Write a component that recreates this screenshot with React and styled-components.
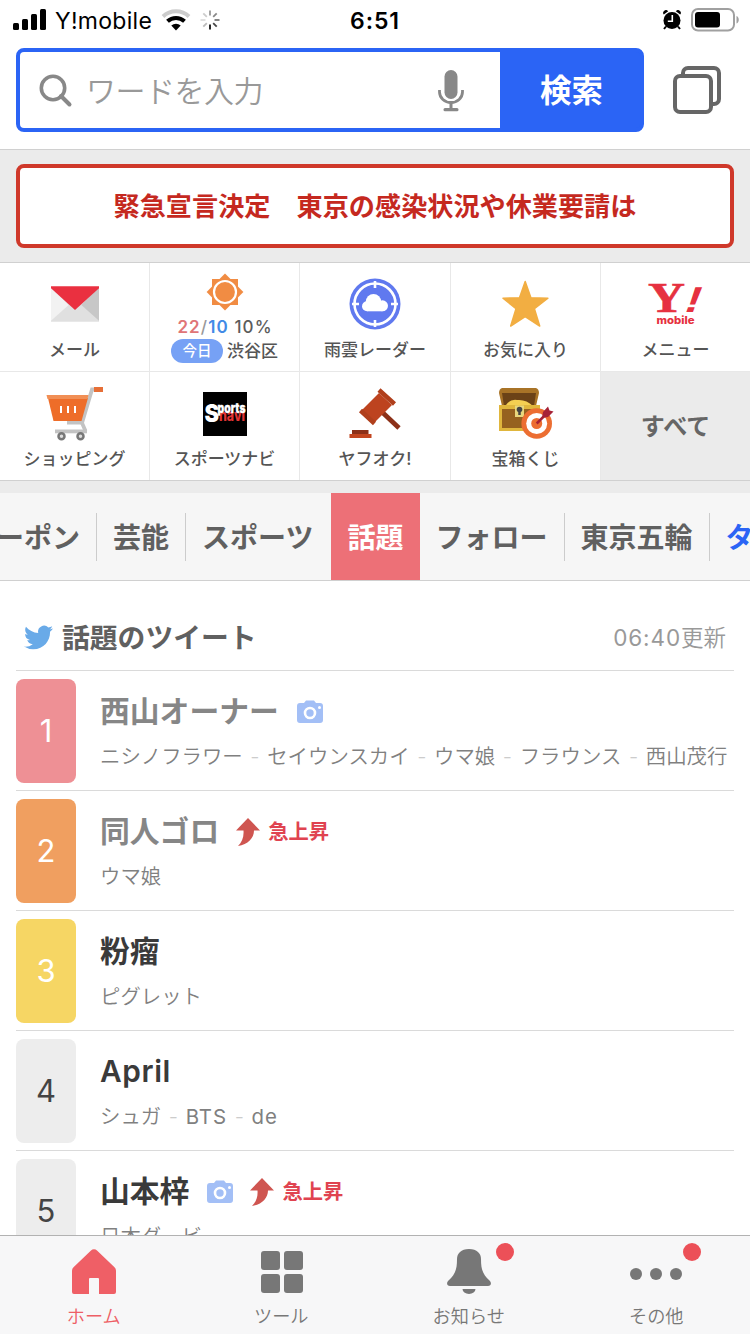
import React from "react";
import styled, { createGlobalStyle } from "styled-components";

const GlobalStyle = createGlobalStyle`
    * { box-sizing: border-box; }
    body {
        margin: 0;
        background: #fff;
        font-family: Inter, "Noto Sans CJK JP", sans-serif;
        color: #666;
    }
    svg { display: block; flex-shrink: 0; }
    button { font-family: inherit; padding: 0; border: none; }
`

const Phone = styled.div`
    display: flex;
    flex-direction: column;
    width: 750px;
    height: 1334px;
    overflow: hidden;
    background: #fff;
`

const StatusBar = styled.header`
    display: grid;
    grid-template-columns: 1fr auto 1fr;
    align-items: center;
    height: 40px;
    padding: 0 11px 0 13px;
    color: #000;
    flex-shrink: 0;
`
const StatusLeft = styled.div`
    display: flex;
    align-items: center;
`
const Carrier = styled.span`
    font-size: 23px;
    line-height: 30px;
    letter-spacing: 0.3px;
    margin: 1px 9px 0 8px;
`
const SpinnerSlot = styled.span`
    margin-left: 9px;
`
const Clock = styled.span`
    font-size: 23px;
    font-weight: 600;
    letter-spacing: 0.9px;
    line-height: 30px;
    margin: 2px 1px 0 -1px;
`
const StatusRight = styled.div`
    display: flex;
    justify-content: flex-end;
    align-items: center;
    gap: 9px;
`

const SearchArea = styled.div`
    display: flex;
    height: 110px;
    padding: 8px 28px 0 16px;
    border-bottom: 1px solid #d0d0d0;
    justify-content: space-between;
    flex-shrink: 0;
`
const SearchBox = styled.div`
    display: flex;
    width: 628px;
    height: 84px;
    border: 4px solid #2b64f5;
    border-radius: 8px;
    overflow: hidden;
    background: #2b64f5;
`
const SearchField = styled.div`
    display: flex;
    align-items: center;
    flex: 1;
    padding: 2px 36px 0 19px;
    background: #fff;
`
const Placeholder = styled.span`
    flex: 1;
    margin-left: 13px;
    font-size: 30px;
    font-weight: 350;
    letter-spacing: -0.5px;
    line-height: 40px;
    color: #999;
`
const SearchBtn = styled.button`
    width: 140px;
    padding: 2px 0 0 3px;
    background: #2b64f5;
    color: #fff;
    font-size: 31.5px;
    font-weight: 700;
    line-height: 40px;
`
const WindowsIcon = styled.div`
    margin-top: 18px;
`

const AlertArea = styled.div`
    height: 113px;
    padding: 14px 16px 0;
    background: #ebebeb;
    border-bottom: 1px solid #d0d0d0;
    flex-shrink: 0;
`
const AlertBox = styled.div`
    display: flex;
    align-items: center;
    justify-content: center;
    height: 84px;
    padding-top: 2px;
    border: 4px solid #cf382a;
    border-radius: 8px;
    background: #fff;
    color: #c5291f;
    font-size: 26.15px;
    font-weight: 700;
    line-height: 40px;
`

const ToolGrid = styled.div`
    display: grid;
    grid-template-columns: 150px 150px 151px 150px 149px;
    grid-template-rows: 109px 108px;
    height: 218px;
    border-bottom: 1px solid #d0d0d0;
    flex-shrink: 0;
`
const Tool = styled.div`
    display: flex;
    flex-direction: column;
    align-items: center;
    justify-content: flex-end;
    padding-bottom: ${(p) => (p.$weather ? "8px" : "9px")};
    border-right: ${(p) => (p.$last ? "none" : "1px solid #e8e8e8")};
    border-bottom: ${(p) => (p.$top ? "1px solid #e8e8e8" : "none")};
`
const ToolIcon = styled.div`
    display: flex;
    align-items: center;
    justify-content: center;
    height: 60px;
    margin-bottom: ${(p) => (p.$top ? "4px" : "3px")};
`
const ToolLabel = styled.div`
    font-size: 17px;
    font-weight: 500;
    line-height: 24px;
    white-space: nowrap;
    color: #555;
`
const AllTools = styled.div`
    display: flex;
    align-items: center;
    justify-content: center;
    padding-top: 1px;
    background: #ebebeb;
    font-size: 24px;
    font-weight: 700;
    line-height: 30px;
`
const Temps = styled.div`
    margin-top: 4px;
    padding-left: 1px;
    font-size: 17px;
    font-weight: 500;
    letter-spacing: 1.1px;
    line-height: 24px;
    color: #5c5c5c;
`
const High = styled.span`
    color: #e07577;
    font-weight: 600;
`
const Low = styled.span`
    color: #418ae6;
    font-weight: 600;
`
const Slash = styled.span`
    color: #999;
`
const Place = styled.div`
    display: flex;
    align-items: center;
    gap: 4px;
    height: 24px;
`
const Today = styled.span`
    width: 52px;
    height: 24px;
    border-radius: 12px;
    background: #76a1f5;
    color: #fff;
    font-size: 14.5px;
    font-weight: 500;
    line-height: 24px;
    text-align: center;
`

const Tabs = styled.nav`
    display: flex;
    height: 100px;
    border-top: 12px solid #ebebeb;
    border-bottom: 1px solid #d0d0d0;
    background: #f6f6f6;
    overflow: hidden;
    flex-shrink: 0;
`
const Tab = styled.div`
    display: flex;
    align-items: center;
    flex-shrink: 0;
    height: 87px;
    padding-top: 1px;
    margin-left: ${(p) => p.$shift || 0}px;
    background: ${(p) => (p.$active ? "#ed7077" : "transparent")};
    color: ${(p) => (p.$active ? "#fff" : p.$blue ? "#2b64f5" : "#606060")};
    font-size: 28px;
    font-weight: 700;
`
const TabText = styled.span`
    display: flex;
    align-items: center;
    height: 48px;
    padding: 2px 16px 0;
    line-height: 40px;
    white-space: nowrap;
    border-right: ${(p) => (p.$line ? "1px solid #ccc" : "none")};
`

const Feed = styled.main`
    flex: 1;
    padding: 0 16px;
    overflow: hidden;
    min-height: 0;
`
const FeedHead = styled.div`
    display: flex;
    align-items: center;
    height: 90px;
    padding: 25px 8px 0;
    border-bottom: 1px solid #dadada;
`
const BirdSlot = styled.span`
    margin-bottom: 2px;
`
const FeedTitle = styled.h1`
    flex: 1;
    margin: 0 0 0 9px;
    font-size: 27.8px;
    font-weight: 700;
    line-height: 40px;
    color: #606060;
`
const Updated = styled.span`
    font-size: 22.5px;
    line-height: 30px;
    font-weight: 350;
    color: #999;
`
const Time = styled.span`
    letter-spacing: 0.9px;
    font-weight: 400;
`
const Row = styled.div`
    display: flex;
    height: 120px;
    padding-top: 8px;
    border-bottom: 1px solid #dadada;
`
const Rank = styled.div`
    display: flex;
    align-items: center;
    justify-content: center;
    width: 60px;
    height: 104px;
    padding-bottom: 2px;
    border-radius: 8px;
    margin-right: 24px;
    flex-shrink: 0;
    background: ${(p) => p.$bg};
    color: ${(p) => (p.$dark ? "#444" : "#fff")};
    font-size: 31px;
`
const Topic = styled.div`
    padding-top: 12px;
    min-width: 0;
`
const TopicHead = styled.div`
    display: flex;
    align-items: center;
    height: 40px;
`
const TopicName = styled.h2`
    margin: 0;
    font-size: 29.8px;
    font-weight: 600;
    letter-spacing: ${(p) => (p.$latin ? "0.6px" : "0")};
    line-height: 40px;
    white-space: nowrap;
    color: ${(p) => (p.$read ? "#868686" : "#3a3a3a")};
`
const CameraSlot = styled.span`
    margin: 2px 0 0 18px;
`
const Rising = styled.span`
    display: flex;
    align-items: center;
    gap: 8px;
    margin-left: 17px;
    color: #e04350;
    font-size: 20.3px;
    font-weight: 700;
    line-height: 30px;
    padding-top: 2px;
`
const Related = styled.div`
    margin-top: 11px;
    font-size: 20.4px;
    font-weight: 350;
    line-height: 30px;
    white-space: nowrap;
    color: #808080;
`
const Latin = styled.span`
    font-weight: 400;
    letter-spacing: 1px;
`
const Dash = styled.span`
    display: inline-block;
    width: 24.5px;
    text-align: center;
    color: #ccc;
`

const BottomBar = styled.footer`
    display: grid;
    grid-template-columns: repeat(4, 1fr);
    height: 99px;
    border-top: 1px solid #b2b2b2;
    background: #f7f7f8;
    flex-shrink: 0;
`
const BarItem = styled.div`
    position: relative;
    display: flex;
    flex-direction: column;
    align-items: center;
    padding-top: 12px;
    color: ${(p) => (p.$active ? "#ee5f66" : "#777")};
`
const BarLabel = styled.span`
    margin-top: 8px;
    font-size: 18.2px;
    font-weight: 350;
    line-height: 24px;
`
const Dot = styled.span`
    position: absolute;
    top: 7px;
    left: 120.5px;
    width: 18px;
    height: 18px;
    border-radius: 50%;
    background: #ec5058;
`

const Signal = () => (
    <svg width="34" height="22" viewBox="0 0 34 22">
        <rect x="0" y="14" width="6" height="7" rx="1.5" />
        <rect x="9" y="10" width="6" height="11" rx="1.5" />
        <rect x="18" y="5" width="6" height="16" rx="1.5" />
        <rect x="27" y="0" width="6" height="21" rx="1.5" />
    </svg>
)

const Wifi = () => (
    <svg width="30" height="22" viewBox="0 0 30 22">
        <path d="M2 7.5a19 19 0 0 1 26 0" fill="none" stroke="#ccc" strokeWidth="4" />
        <path d="M6.5 12.3a12.5 12.5 0 0 1 17 0" fill="none" stroke="#000" strokeWidth="4" />
        <path d="M10.3 16.5a7 7 0 0 1 9.4 0L15 21.5z" />
    </svg>
)

const spokes = ["#111", "#bbb", "#ddd", "#ccc", "#999", "#888", "#777", "#444"]
const Spinner = () => (
    <svg width="20" height="20" viewBox="-10 -10 20 20">
        {spokes.map((c, i) => (
            <line key={c} x1="0" y1="4.5" x2="0" y2="9.5" stroke={c} strokeWidth="1.8" transform={`rotate(${i * 45})`} />
        ))}
    </svg>
)

const Alarm = () => (
    <svg width="20" height="20" viewBox="0 0 20 20">
        <circle cx="10" cy="10.5" r="8.5" />
        <path d="M1.8 4.6a2.6 2.6 0 0 1 4.4-3.4zM18.2 4.6a2.6 2.6 0 0 0-4.4-3.4z" />
        <path d="M4 16.5l-2 2.5M16 16.5l2 2.5" stroke="#000" strokeWidth="2" />
        <path d="M10.3 5v6.2H5.8" fill="none" stroke="#fff" strokeWidth="1.6" />
    </svg>
)

const Battery = () => (
    <svg width="48" height="24" viewBox="0 0 48 24">
        <rect x="1" y="1" width="42" height="21.5" rx="6" fill="none" stroke="#a0a0a0" strokeWidth="2" />
        <rect x="4" y="4" width="25" height="15.5" rx="3" />
        <path d="M45.5 8c3 1 3 6.5 0 7.5z" fill="#a0a0a0" />
    </svg>
)

const Magnifier = () => (
    <svg width="34" height="34" viewBox="0 0 34 34" fill="none" stroke="#888">
        <circle cx="14" cy="14" r="11.7" strokeWidth="3.6" />
        <path d="M22 22l8.5 8.5" strokeWidth="4" strokeLinecap="round" />
    </svg>
)

const Mic = () => (
    <svg width="26" height="42" viewBox="0 0 26 42">
        <rect x="6.5" y="0" width="13" height="29" rx="6.5" fill="#888" />
        <path d="M1.5 20v2a11.5 10.5 0 0 0 23 0v-2" fill="none" stroke="#888" strokeWidth="2.8" />
        <path d="M11.5 33h3v5h-3z" fill="#888" />
        <rect x="5.5" y="38" width="15" height="3.2" rx="1.5" fill="#888" />
    </svg>
)

const Windows = () => (
    <svg width="49" height="49" viewBox="0 0 49 49" fill="none" stroke="#666" strokeWidth="4">
        <path d="M10 8V7a5 5 0 0 1 5-5h26a5 5 0 0 1 5 5v26a5 5 0 0 1-5 5h-1" />
        <rect x="2" y="10" width="36" height="36" rx="5" />
    </svg>
)

const MailIcon = () => (
    <svg width="48" height="36" viewBox="0 0 49 36">
        <path d="M0 1h49v35H0z" fill="#e0e0e0" />
        <path d="M0 1v34l18-16z" fill="#f2f2f2" />
        <path d="M49 1v34L31 19z" fill="#c7c7c7" />
        <path d="M0 0h49v2L24.5 24 0 2z" fill="#ea3040" />
    </svg>
)

const SunIcon = () => (
    <svg width="38" height="38" viewBox="-19 -19 38 38">
        <rect x="-13" y="-13" width="26" height="26" fill="#f18c43" />
        <rect x="-13" y="-13" width="26" height="26" fill="#f18c43" transform="rotate(45)" />
        <circle r="11" fill="none" stroke="#fff" strokeWidth="2.2" />
    </svg>
)

const RadarIcon = () => (
    <svg width="52" height="52" viewBox="-26 -26 52 52">
        <circle r="25.5" fill="#6079ef" />
        <circle r="20.5" fill="none" stroke="#fff" strokeWidth="2.6" />
        <path d="M0-23v7M0 23v-7M-23 0h7M23 0h-7" stroke="#fff" strokeWidth="2.6" />
        <g fill="#fff">
            <circle cx="-8" cy="2.3" r="5" />
            <circle cx="-1.5" cy="-2.3" r="7.7" />
            <circle cx="7.5" cy="1.8" r="5.5" />
            <rect x="-8" y="1" width="15.5" height="6.3" />
        </g>
    </svg>
)

const StarIcon = () => (
    <svg width="48" height="48" viewBox="0.8 0 48 48">
        <path d="M24 1.5l5.7 16.3 17 .4-13.5 10.5L38.5 46 24 36.5 9.5 46l5.3-17.3L1.8 18.2l16.500-.4z" fill="#f2ae42" stroke="#f2ae42" strokeWidth="1.5" strokeLinejoin="round" />
    </svg>
)

const YMobileIcon = () => (
    <svg width="64" height="60" viewBox="-4 -7 64 60" fill="#e63140">
        <text x="0" y="31" fontFamily="Liberation Serif, serif" fontWeight="700" fontSize="42" stroke="#e63140" strokeWidth="0.6" textLength="37" lengthAdjust="spacingAndGlyphs">Y</text>
        <text transform="translate(34 31) skewX(-20) scale(1.3 1)" fontFamily="Liberation Sans, sans-serif" fontWeight="700" fontSize="36">!</text>
        <text x="8.5" y="43" fontFamily="Inter, sans-serif" fontWeight="800" fontSize="10.5" textLength="38" lengthAdjust="spacingAndGlyphs">mobile</text>
    </svg>
)

const CartIcon = () => (
    <svg width="58" height="54" viewBox="0 0 58 54">
        <path d="M48 2.5h-2L36 36l3.5 8" fill="none" stroke="#c3c3c3" strokeWidth="3.8" />
        <rect x="21" y="34" width="16" height="3.5" fill="#c3c3c3" />
        <rect x="9" y="42.5" width="32" height="3.8" fill="#c3c3c3" />
        <path d="M2 11h40l-6.5 23H7.5z" fill="#ee6d29" />
        <path d="M.5 8h42l-1 4H1.5z" fill="#f18f55" />
        <path d="M15 19v7M22 19v7M29 19v7" stroke="#fff" strokeWidth="2" />
        <rect x="48" y="0" width="9" height="5" fill="#e66f37" />
        <circle cx="15.5" cy="49.3" r="3" fill="#ddd" stroke="#777" strokeWidth="2.5" />
        <circle cx="34.5" cy="49.3" r="3" fill="#ddd" stroke="#777" strokeWidth="2.5" />
    </svg>
)

const SportsIcon = () => (
    <svg width="44" height="44" viewBox="0 0 44 44" fontFamily="Inter, sans-serif" fontWeight="900">
        <rect width="44" height="44" />
        <text x="16" y="29" fontSize="15" fontWeight="800" fill="#e23434" textLength="26" lengthAdjust="spacingAndGlyphs">navi</text>
        <text x="1.5" y="29.5" fontSize="24" fill="#fff" textLength="14.5" lengthAdjust="spacingAndGlyphs">S</text>
        <text x="14.5" y="20.500" fontSize="13" fill="#fff" stroke="#fff" strokeWidth="0.3" textLength="28" lengthAdjust="spacingAndGlyphs">ports</text>
    </svg>
)

const GavelIcon = () => (
    <svg width="54" height="52" viewBox="0 0 54 52">
        <path d="M34 24l17 16" stroke="#8c3018" strokeWidth="4.8" />
        <path d="M31 5l13 12-18 18-13-12z" fill="#bd431f" />
        <path d="M31 2l15.5 14M12.5 22.5l14 13" stroke="#b03f1c" strokeWidth="4.5" />
        <rect x="4" y="42" width="16.5" height="4.5" fill="#8c3018" />
        <rect x="1.5" y="46" width="22" height="4" fill="#c2451f" />
    </svg>
)

const ChestIcon = () => (
    <svg width="58" height="52" viewBox="1 0 58 52">
        <path d="M6 0h34q3 1 3 5l-3 13H6L3 5q0-4 3-5z" fill="#a87327" />
        <path d="M6 5h34l-2 13H8z" fill="#6b4217" />
        <path d="M10 17q4-6 11-5 9-1 16 6z" fill="#f4cf52" />
        <rect x="3" y="17" width="41" height="26" fill="#e0b63d" />
        <rect x="6" y="21" width="36" height="19" fill="#96611f" />
        <rect x="19" y="17.5" width="9" height="11.5" fill="#e8d77d" />
        <circle cx="23.5" cy="21.5" r="2.8" fill="#444" />
        <path d="M23.5 21v6" stroke="#444" strokeWidth="2.5" />
        <circle cx="40.7" cy="35.5" r="15.3" fill="#ec6e32" />
        <circle cx="40.7" cy="35.5" r="10.5" fill="#fff" />
        <circle cx="40.7" cy="35.5" r="5.5" fill="#ec6e32" />
        <path d="M40.7 35.5l12-12" stroke="#a62236" strokeWidth="2.5" />
        <path d="M46 30l1-6 5-5.5 1.500 4 4 1-5.500 5.500z" fill="#a62236" />
    </svg>
)

const Bird = () => (
    <svg width="29" height="25" viewBox="0 2 24 20">
        <path fill="#69aae8" d="M23.953 4.57a10 10 0 0 1-2.825.775 4.958 4.958 0 0 0 2.163-2.723c-.951.555-2.005.959-3.127 1.184a4.92 4.92 0 0 0-8.384 4.482C7.69 8.095 4.067 6.13 1.64 3.162a4.822 4.822 0 0 0-.666 2.475c0 1.71.87 3.213 2.188 4.096a4.904 4.904 0 0 1-2.228-.616v.06a4.923 4.923 0 0 0 3.946 4.827 4.996 4.996 0 0 1-2.212.085 4.936 4.936 0 0 0 4.604 3.417 9.867 9.867 0 0 1-6.102 2.105c-.39 0-.779-.023-1.17-.067a13.995 13.995 0 0 0 7.557 2.209c9.053 0 13.998-7.496 13.998-13.985 0-.21 0-.42-.015-.63A9.935 9.935 0 0 0 24 4.59z" />
    </svg>
)

const Camera = () => (
    <svg width="26" height="24" viewBox="0 0 26 24">
        <path d="M3 3h4l2-2.5h8L19 3h4a3 3 0 0 1 3 3v14a3 3 0 0 1-3 3H3a3 3 0 0 1-3-3V6a3 3 0 0 1 3-3z" fill="#a3bff6" />
        <circle cx="13" cy="13" r="5" fill="none" stroke="#fff" strokeWidth="2.6" />
        <circle cx="22.5" cy="7.5" r="1.5" fill="#fff" />
    </svg>
)

const RiseArrow = () => (
    <svg width="24" height="28" viewBox="0 0 24 28">
        <path d="M12 0l12 12.5h-6C18 20 12 26.5 2 28c4-4 6-9 5.5-15.5H0z" fill="#cf5550" />
    </svg>
)

const HomeIcon = () => (
    <svg width="46" height="48" viewBox="0 0 46 48">
        <path d="M20 2.5a4 4 0 0 1 6 0l17.5 16.8a5 5 0 0 1 1.5 3.5V44a2 2 0 0 1-2 2H28V31a1 1 0 0 0-1-1h-8a1 1 0 0 0-1 1v15H3a2 2 0 0 1-2-2V22.8a5 5 0 0 1 1.5-3.5z" fill="#ef5f66" />
    </svg>
)

const ToolsIcon = () => (
    <svg width="43" height="48" viewBox="0 0 43 48" fill="#777">
        <rect x="1" y="3" width="19" height="19" rx="3" />
        <rect x="24" y="3" width="19" height="19" rx="3" />
        <rect x="1" y="26" width="19" height="19" rx="3" />
        <rect x="24" y="26" width="19" height="19" rx="3" />
    </svg>
)

const BellIcon = () => (
    <svg width="44" height="48" viewBox="0 0 44 48" fill="#777">
        <path d="M22 1c8 0 12 4.500 12 10 0 11 2 15.500 8.500 21.500 2.500 2.500 1.500 5.500-1.500 5.500H3c-3 0-4-3-1.500-5.500C8 26.500 10 22 10 11 10 5.500 14 1 22 1z" />
        <path d="M15.5 41h13a6.5 5 0 0 1-13 0z" />
    </svg>
)

const DotsIcon = () => (
    <svg width="52" height="48" viewBox="0 0 52 48" fill="#777">
        <circle cx="6" cy="26" r="6" />
        <circle cx="26" cy="26" r="6" />
        <circle cx="46" cy="26" r="6" />
    </svg>
)

const tabs = [
    { text: "クーポン", shift: -48, line: true },
    { text: "芸能", line: true },
    { text: "スポーツ" },
    { text: "話題", shift: 2, active: true },
    { text: "フォロー", line: true },
    { text: "東京五輪", line: true },
    { text: "タイムライン", blue: true },
]

const topics = [
    { name: "西山オーナー", bg: "#ee9095", read: true, camera: true, related: ["ニシノフラワー", "セイウンスカイ", "ウマ娘", "フラウンス", "西山茂行"] },
    { name: "同人ゴロ", bg: "#f09f60", read: true, rising: true, related: ["ウマ娘"] },
    { name: "粉瘤", bg: "#f6d664", related: ["ピグレット"] },
    { name: "April", bg: "#ededed", related: ["シュガ", "BTS", "de"] },
    { name: "山本梓", bg: "#ededed", camera: true, rising: true, related: ["日本ダービー"] },
]

const isLatin = (word) => /^[a-z]+$/i.test(word)

const TopicRow = ({ topic, rank }) => (
    <Row>
        <Rank $bg={topic.bg} $dark={rank > 3}>{rank}</Rank>
        <Topic>
            <TopicHead>
                <TopicName $read={topic.read} $latin={isLatin(topic.name)}>{topic.name}</TopicName>
                {topic.camera && <CameraSlot><Camera /></CameraSlot>}
                {topic.rising && (
                    <Rising>
                        <RiseArrow />
                        急上昇
                    </Rising>
                )}
            </TopicHead>
            <Related>
                {topic.related.map((word, i) => (
                    <React.Fragment key={word}>
                        {i > 0 && <Dash>-</Dash>}
                        {isLatin(word) ? <Latin>{word}</Latin> : word}
                    </React.Fragment>
                ))}
            </Related>
        </Topic>
    </Row>
)

const App = () => {
    return (
        <Phone>
            <GlobalStyle />
            <StatusBar>
                <StatusLeft>
                    <Signal />
                    <Carrier>Y!mobile</Carrier>
                    <Wifi />
                    <SpinnerSlot><Spinner /></SpinnerSlot>
                </StatusLeft>
                <Clock>6:51</Clock>
                <StatusRight>
                    <Alarm />
                    <Battery />
                </StatusRight>
            </StatusBar>

            <SearchArea>
                <SearchBox>
                    <SearchField>
                        <Magnifier />
                        <Placeholder>ワードを入力</Placeholder>
                        <Mic />
                    </SearchField>
                    <SearchBtn>検索</SearchBtn>
                </SearchBox>
                <WindowsIcon><Windows /></WindowsIcon>
            </SearchArea>

            <AlertArea>
                <AlertBox>緊急宣言決定　東京の感染状況や休業要請は</AlertBox>
            </AlertArea>

            <ToolGrid>
                <Tool $top>
                    <ToolIcon $top><MailIcon /></ToolIcon>
                    <ToolLabel>メール</ToolLabel>
                </Tool>
                <Tool $top $weather>
                    <SunIcon />
                    <Temps><High>22</High><Slash>/</Slash><Low>10</Low> 10%</Temps>
                    <Place>
                        <Today>今日</Today>
                        <ToolLabel>渋谷区</ToolLabel>
                    </Place>
                </Tool>
                <Tool $top>
                    <ToolIcon $top><RadarIcon /></ToolIcon>
                    <ToolLabel>雨雲レーダー</ToolLabel>
                </Tool>
                <Tool $top>
                    <ToolIcon $top><StarIcon /></ToolIcon>
                    <ToolLabel>お気に入り</ToolLabel>
                </Tool>
                <Tool $top $last>
                    <ToolIcon $top><YMobileIcon /></ToolIcon>
                    <ToolLabel>メニュー</ToolLabel>
                </Tool>
                <Tool>
                    <ToolIcon><CartIcon /></ToolIcon>
                    <ToolLabel>ショッピング</ToolLabel>
                </Tool>
                <Tool>
                    <ToolIcon><SportsIcon /></ToolIcon>
                    <ToolLabel>スポーツナビ</ToolLabel>
                </Tool>
                <Tool>
                    <ToolIcon><GavelIcon /></ToolIcon>
                    <ToolLabel>ヤフオク!</ToolLabel>
                </Tool>
                <Tool>
                    <ToolIcon><ChestIcon /></ToolIcon>
                    <ToolLabel>宝箱くじ</ToolLabel>
                </Tool>
                <AllTools>すべて</AllTools>
            </ToolGrid>

            <Tabs>
                {tabs.map((t) => (
                    <Tab key={t.text} $shift={t.shift} $active={t.active} $blue={t.blue}>
                        <TabText $line={t.line}>{t.text}</TabText>
                    </Tab>
                ))}
            </Tabs>

            <Feed>
                <FeedHead>
                    <BirdSlot><Bird /></BirdSlot>
                    <FeedTitle>話題のツイート</FeedTitle>
                    <Updated><Time>06:40</Time>更新</Updated>
                </FeedHead>
                {topics.map((t, i) => (
                    <TopicRow key={t.name} topic={t} rank={i + 1} />
                ))}
            </Feed>

            <BottomBar>
                <BarItem $active>
                    <HomeIcon />
                    <BarLabel>ホーム</BarLabel>
                </BarItem>
                <BarItem>
                    <ToolsIcon />
                    <BarLabel>ツール</BarLabel>
                </BarItem>
                <BarItem>
                    <BellIcon />
                    <BarLabel>お知らせ</BarLabel>
                    <Dot />
                </BarItem>
                <BarItem>
                    <DotsIcon />
                    <BarLabel>その他</BarLabel>
                    <Dot />
                </BarItem>
            </BottomBar>
        </Phone>
    );
};

export default App;
